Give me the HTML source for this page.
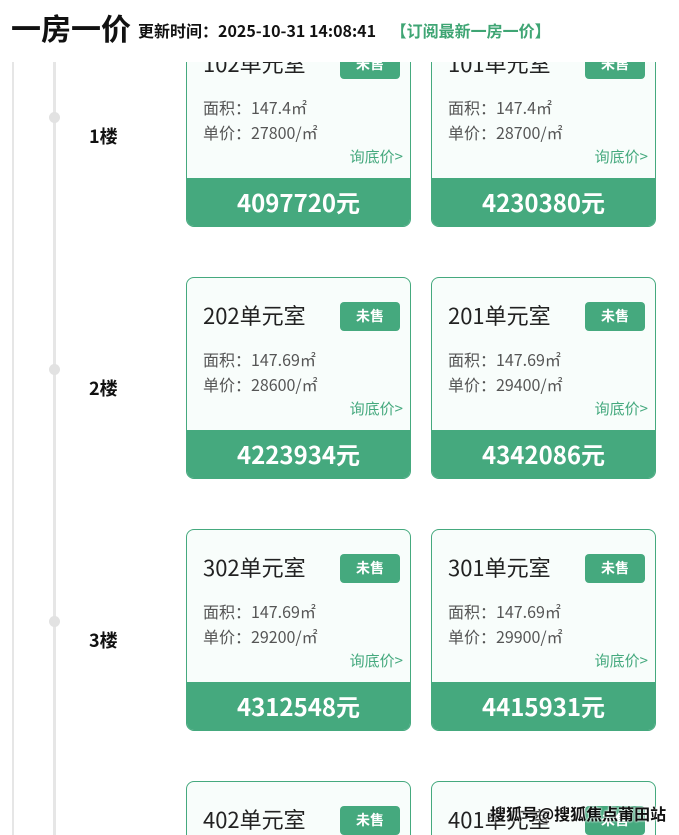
<!DOCTYPE html>
<html><head><meta charset="utf-8"><style>
*{margin:0;padding:0;box-sizing:border-box}
html,body{width:679px;height:835px;overflow:hidden}
body{background:#fff;font-family:"Noto Sans CJK SC","Liberation Sans",sans-serif;position:relative;line-height:1.2}
.h1{position:absolute;left:11px;top:9px;font-size:30px;font-weight:bold;color:#111;white-space:nowrap}
.h2{position:absolute;left:138px;top:21px;font-size:16px;font-weight:bold;color:#111;white-space:nowrap}
.h2 span{color:#3fa574;margin-left:11px;font-size:16px}
.wrap{position:absolute;left:0;top:62px;width:679px;height:773px;overflow:hidden}
.vl{position:absolute;left:12px;top:0;width:2px;height:800px;background:#e6e6e6}
.tl{position:absolute;left:53px;top:0;width:3px;height:800px;background:#e6e6e6}
.dot{position:absolute;left:49px;width:11px;height:11px;border-radius:50%;background:#e2e2e2}
.fl{position:absolute;left:89px;font-size:18px;font-weight:bold;color:#111}
.card{position:absolute;width:225px;height:202px;border:1px solid #45a97e;border-radius:8px;background:#f8fdfb;overflow:hidden}
.t{position:absolute;left:16px;top:24px;font-size:22px;color:#222}
.b{position:absolute;left:153px;top:24px;width:60px;height:29px;background:#45a97e;border-radius:4px;color:#fff;font-size:14px;font-weight:bold;text-align:center;line-height:29px}
.i{position:absolute;left:16px;font-size:16px;color:#555}
.q{position:absolute;right:7px;top:122px;font-size:15px;color:#45a97e}
.f{position:absolute;left:0;bottom:0;width:100%;height:48px;background:#45a97e;color:#fff;font-size:24px;font-weight:bold;text-align:center;line-height:48px}
.wm{position:absolute;left:490px;top:804px;font-size:16px;font-weight:bold;color:#111;text-shadow:0 0 2px #fff,0 0 2px #fff;white-space:nowrap}
</style></head><body>
<div class="h1">一房一价</div>
<div class="h2">更新时间：2025-10-31 14:08:41 <span>【订阅最新一房一价】</span></div>
<div class="wrap">
<div class="vl"></div><div class="tl"></div>

<div class="dot" style="top:50px"></div><div class="fl" style="top:64px">1楼</div>
<div class="card" style="left:186px;top:-37px"><div class="t">102单元室</div><div class="b">未售</div><div class="i" style="top:72px">面积：147.4㎡</div><div class="i" style="top:97px">单价：27800/㎡</div><div class="q">询底价&gt;</div><div class="f">4097720元</div></div>
<div class="card" style="left:431px;top:-37px"><div class="t">101单元室</div><div class="b">未售</div><div class="i" style="top:72px">面积：147.4㎡</div><div class="i" style="top:97px">单价：28700/㎡</div><div class="q">询底价&gt;</div><div class="f">4230380元</div></div>

<div class="dot" style="top:302px"></div><div class="fl" style="top:316px">2楼</div>
<div class="card" style="left:186px;top:215px"><div class="t">202单元室</div><div class="b">未售</div><div class="i" style="top:72px">面积：147.69㎡</div><div class="i" style="top:97px">单价：28600/㎡</div><div class="q">询底价&gt;</div><div class="f">4223934元</div></div>
<div class="card" style="left:431px;top:215px"><div class="t">201单元室</div><div class="b">未售</div><div class="i" style="top:72px">面积：147.69㎡</div><div class="i" style="top:97px">单价：29400/㎡</div><div class="q">询底价&gt;</div><div class="f">4342086元</div></div>

<div class="dot" style="top:554px"></div><div class="fl" style="top:568px">3楼</div>
<div class="card" style="left:186px;top:467px"><div class="t">302单元室</div><div class="b">未售</div><div class="i" style="top:72px">面积：147.69㎡</div><div class="i" style="top:97px">单价：29200/㎡</div><div class="q">询底价&gt;</div><div class="f">4312548元</div></div>
<div class="card" style="left:431px;top:467px"><div class="t">301单元室</div><div class="b">未售</div><div class="i" style="top:72px">面积：147.69㎡</div><div class="i" style="top:97px">单价：29900/㎡</div><div class="q">询底价&gt;</div><div class="f">4415931元</div></div>

<div class="card" style="left:186px;top:719px"><div class="t">402单元室</div><div class="b">未售</div></div>
<div class="card" style="left:431px;top:719px"><div class="t">401单元室</div><div class="b">未售</div></div>
</div>
<div class="wm">搜狐号@搜狐焦点莆田站</div>
</body></html>
